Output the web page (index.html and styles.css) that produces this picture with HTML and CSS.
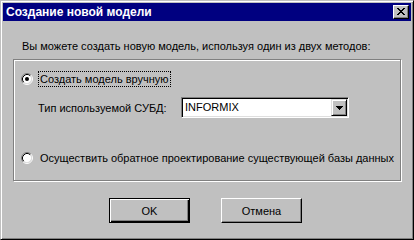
FILE: index.html
```html
<!DOCTYPE html>
<html lang="ru">
<head>
<meta charset="utf-8">
<title>Создание новой модели</title>
<link rel="stylesheet" href="styles.css">
</head>
<body>
<div class="window">
  <div class="titlebar">
    <span class="title">Создание новой модели</span>
    <span class="close">
      <svg width="8" height="7" viewBox="0 0 8 7" shape-rendering="crispEdges"><path fill="#000" d="M0 0h2v1h-2z M6 0h2v1h-2z M1 1h2v1h-2z M5 1h2v1h-2z M2 2h4v1h-4z M3 3h2v1h-2z M2 4h4v1h-4z M1 5h2v1h-2z M5 5h2v1h-2z M0 6h2v1h-2z M6 6h2v1h-2z"/></svg>
    </span>
  </div>
  <div class="content">
    <p class="intro">Вы можете создать новую модель, используя один из двух методов:</p>
    <div class="group">
      <div class="opt">
        <svg class="radio" width="12" height="12" viewBox="0 0 12 12">
          <circle cx="6" cy="6" r="4.5" fill="#fff"/>
          <path d="M2.11 9.89 A5.5 5.5 0 0 1 9.89 2.11" fill="none" stroke="#808080"/>
          <path d="M9.89 2.11 A5.5 5.5 0 0 1 2.11 9.89" fill="none" stroke="#fff"/>
          <path d="M2.82 9.18 A4.5 4.5 0 0 1 9.18 2.82" fill="none" stroke="#000"/>
          <path d="M9.18 2.82 A4.5 4.5 0 0 1 2.82 9.18" fill="none" stroke="#dfdfdf"/>
          <circle cx="6" cy="6" r="2" fill="#000"/>
        </svg>
        <span class="label focus">Создать модель вручную</span>
      </div>
      <div class="dbms">
        <span class="dbms-label">Тип используемой СУБД:</span>
        <div class="combo">
          <span class="combo-text">INFORMIX</span>
          <span class="drop">
            <svg width="7" height="4" viewBox="0 0 7 4" shape-rendering="crispEdges"><path fill="#000" d="M0 0h7v1h-7z M1 1h5v1h-5z M2 2h3v1h-3z M3 3h1v1h-1z"/></svg>
          </span>
        </div>
      </div>
      <div class="opt opt2">
        <svg class="radio" width="12" height="12" viewBox="0 0 12 12">
          <circle cx="6" cy="6" r="4.5" fill="#fff"/>
          <path d="M2.11 9.89 A5.5 5.5 0 0 1 9.89 2.11" fill="none" stroke="#808080"/>
          <path d="M9.89 2.11 A5.5 5.5 0 0 1 2.11 9.89" fill="none" stroke="#fff"/>
          <path d="M2.82 9.18 A4.5 4.5 0 0 1 9.18 2.82" fill="none" stroke="#000"/>
          <path d="M9.18 2.82 A4.5 4.5 0 0 1 2.82 9.18" fill="none" stroke="#dfdfdf"/>
        </svg>
        <span class="label">Осуществить обратное проектирование существующей базы данных</span>
      </div>
    </div>
    <div class="buttons">
      <button class="btn default">OK</button>
      <button class="btn">Отмена</button>
    </div>
  </div>
</div>
</body>
</html>
```

FILE: styles.css
```css
html, body {
  margin: 0;
  padding: 0;
}
body {
  font-family: "Liberation Sans", Arial, sans-serif;
  font-size: 11px;
  color: #000;
  background: #c0c0c0;
}
.window {
  width: 414px;
  height: 240px;
  box-sizing: border-box;
  border: 1px solid;
  border-color: #c0c0c0 #000 #000 #c0c0c0;
  box-shadow: inset 1px 1px #fff, inset -1px -1px #808080;
  padding: 2px;
  display: flex;
  flex-direction: column;
  background: #c0c0c0;
}
.titlebar {
  height: 18px;
  flex: none;
  background: #000080;
  color: #fff;
  display: flex;
  align-items: center;
  justify-content: space-between;
  padding: 0 2px 0 3px;
}
.title {
  font-weight: bold;
  font-size: 12px;
  line-height: 18px;
  white-space: nowrap;
}
.close {
  width: 16px;
  height: 14px;
  box-sizing: border-box;
  background: #c0c0c0;
  border: 1px solid;
  border-color: #fff #000 #000 #fff;
  box-shadow: inset -1px -1px #808080;
  display: flex;
  align-items: center;
  justify-content: center;
  padding: 0 1px 1px 0;
}
.close svg {
  display: block;
}
.content {
  flex: 1;
  padding: 19px 10px 0 10px;
}
.intro {
  margin: 0 0 6px 9px;
  line-height: 13px;
  white-space: nowrap;
}
.group {
  border: 1px solid #808080;
  box-shadow: 1px 1px 0 #fff, inset 1px 1px 0 #fff;
  padding: 11px 7px 14px 7px;
}
.opt {
  display: flex;
  align-items: center;
  height: 16px;
}
.opt2 {
  margin-top: 32px;
}
.radio {
  display: block;
  flex: none;
  margin-right: 5px;
}
.label {
  border: 1px solid transparent;
  padding: 0 1px;
  line-height: 14px;
  white-space: nowrap;
}
.label.focus {
  border: 1px dotted #000;
}
.dbms {
  display: flex;
  align-items: center;
  margin: 10px 0 0 17px;
}
.dbms-label {
  width: 143px;
  flex: none;
  white-space: nowrap;
}
.combo {
  width: 168px;
  height: 21px;
  box-sizing: border-box;
  border: 1px solid;
  border-color: #808080 #fff #fff #808080;
  box-shadow: inset 1px 1px #000, inset -1px -1px #dfdfdf;
  padding: 1px;
  background: #fff;
  display: flex;
  align-items: center;
}
.combo-text {
  flex: 1;
  padding-left: 2px;
  line-height: 17px;
}
.drop {
  width: 16px;
  height: 17px;
  box-sizing: border-box;
  background: #c0c0c0;
  border: 1px solid;
  border-color: #dfdfdf #000 #000 #dfdfdf;
  box-shadow: inset 1px 1px #fff, inset -1px -1px #808080;
  display: flex;
  align-items: center;
  justify-content: center;
}
.drop svg {
  display: block;
}
.buttons {
  display: flex;
  gap: 31px;
  margin: 17px 0 0 96px;
}
.btn {
  width: 81px;
  height: 25px;
  box-sizing: border-box;
  font-family: "Liberation Sans", Arial, sans-serif;
  font-size: 11px;
  color: #000;
  background: #c0c0c0;
  border: 1px solid;
  border-color: #fff #000 #000 #fff;
  box-shadow: inset -1px -1px #808080;
  padding: 0;
  margin: 0;
}
.btn.default {
  border-color: #000;
  box-shadow: inset 1px 1px #fff, inset -1px -1px #000, inset -2px -2px #808080;
}
```
